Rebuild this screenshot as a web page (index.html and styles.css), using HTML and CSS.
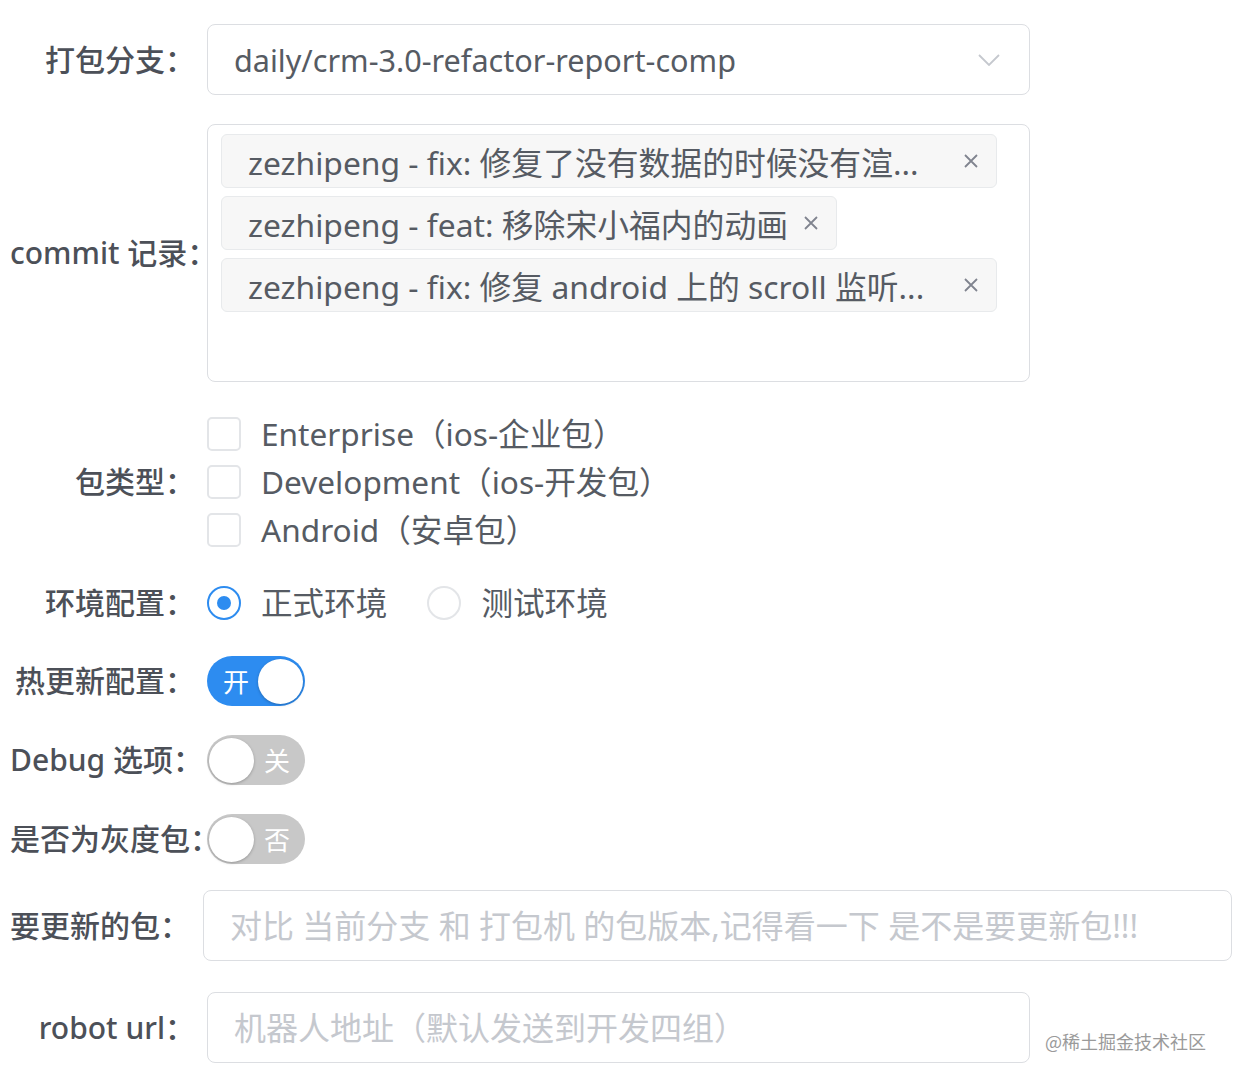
FILE: index.html
```html
<!DOCTYPE html>
<html lang="zh-CN">
<head>
<meta charset="utf-8">
<title>打包配置</title>
<link rel="stylesheet" href="styles.css">
</head>
<body>
<div class="form">
  <div class="row row-select">
    <label class="label">打包分支：</label>
    <div class="control select">
      <span class="select-text">daily/crm-3.0-refactor-report-comp</span>
      <svg class="arrow" width="22" height="12" viewBox="0 0 22 12"><path d="M1 1 L11 11 L21 1" fill="none" stroke="#c5c8ce" stroke-width="1.8"/></svg>
    </div>
  </div>

  <div class="row row-commit">
    <label class="label">commit 记录：</label>
    <div class="control tagbox">
      <div class="tag">
        <span class="tag-text tag-text-cap">zezhipeng - fix: 修复了没有数据的时候没有渲...</span>
        <svg class="close" width="16" height="16" viewBox="0 0 16 16"><path d="M2 2 L14 14 M14 2 L2 14" stroke="#80848f" stroke-width="1.8"/></svg>
      </div>
      <div class="tag">
        <span class="tag-text">zezhipeng - feat: 移除宋小福内的动画</span>
        <svg class="close" width="16" height="16" viewBox="0 0 16 16"><path d="M2 2 L14 14 M14 2 L2 14" stroke="#80848f" stroke-width="1.8"/></svg>
      </div>
      <div class="tag">
        <span class="tag-text tag-text-cap">zezhipeng - fix: 修复 android 上的 scroll 监听...</span>
        <svg class="close" width="16" height="16" viewBox="0 0 16 16"><path d="M2 2 L14 14 M14 2 L2 14" stroke="#80848f" stroke-width="1.8"/></svg>
      </div>
    </div>
  </div>

  <div class="row row-check">
    <label class="label">包类型：</label>
    <div class="control checks">
      <div class="check"><span class="check-box"></span><span class="opt-text">Enterprise（ios-企业包）</span></div>
      <div class="check"><span class="check-box"></span><span class="opt-text">Development（ios-开发包）</span></div>
      <div class="check"><span class="check-box"></span><span class="opt-text">Android（安卓包）</span></div>
    </div>
  </div>

  <div class="row row-radio">
    <label class="label">环境配置：</label>
    <div class="control radios">
      <div class="radio radio-on"><span class="radio-circle"><span class="radio-dot"></span></span><span class="opt-text">正式环境</span></div>
      <div class="radio"><span class="radio-circle"></span><span class="opt-text">测试环境</span></div>
    </div>
  </div>

  <div class="row row-switch">
    <label class="label">热更新配置：</label>
    <div class="switch switch-on"><span class="switch-text">开</span><span class="knob"></span></div>
  </div>

  <div class="row row-switch">
    <label class="label">Debug 选项：</label>
    <div class="switch switch-off"><span class="knob"></span><span class="switch-text">关</span></div>
  </div>

  <div class="row row-switch row-switch-last">
    <label class="label">是否为灰度包：</label>
    <div class="switch switch-off"><span class="knob"></span><span class="switch-text">否</span></div>
  </div>

  <div class="row row-input row-wide">
    <label class="label label-narrow">要更新的包：</label>
    <input class="control text-input input-wide" type="text" placeholder="对比 当前分支 和 打包机 的包版本,记得看一下 是不是要更新包!!!">
  </div>

  <div class="row row-input row-last">
    <label class="label">robot url：</label>
    <input class="control text-input" type="text" placeholder="机器人地址（默认发送到开发四组）">
  </div>
</div>
<div class="watermark">@稀土掘金技术社区</div>
</body>
</html>
```

FILE: styles.css
```css
html, body {
  margin: 0;
  padding: 0;
  background: #ffffff;
}

body {
  font-family: "Noto Sans", "Noto Sans CJK SC", sans-serif;
  color: #515a6e;
  width: 1234px;
  height: 1080px;
  overflow: hidden;
  position: relative;
}

.form {
  padding-top: 24px;
}

.row {
  display: flex;
  align-items: center;
}

.label {
  box-sizing: border-box;
  flex: 0 0 207px;
  width: 207px;
  padding: 0 12px 0 10px;
  text-align: right;
  white-space: nowrap;
  font-size: 30px;
  font-weight: 500;
  line-height: 40px;
  color: #4c5058;
}

.label-narrow {
  flex-basis: 203px;
  width: 203px;
  padding-right: 13px;
}

.control {
  box-sizing: border-box;
  width: 823px;
  border: 1px solid #dcdee2;
  border-radius: 8px;
  background: #fff;
}

/* select */
.row-select {
  margin-bottom: 29px;
}

.select {
  height: 71px;
  display: flex;
  align-items: center;
  justify-content: space-between;
  padding: 0 29px 0 26px;
  font-size: 30.6px;
  color: #565b63;
}

.arrow {
  display: block;
}

/* tags */
.row-commit {
  margin-bottom: 28px;
}

.tagbox {
  height: 258px;
  padding: 9px 13px;
  display: flex;
  flex-direction: column;
  align-items: flex-start;
  gap: 8px;
}

.tag {
  box-sizing: border-box;
  height: 54px;
  display: flex;
  align-items: center;
  padding: 0 17px 0 26px;
  background: #f7f7f7;
  border: 1px solid #e8eaec;
  border-radius: 6px;
  font-size: 31.8px;
  color: #565b63;
  white-space: nowrap;
}

.tag-text-cap {
  display: inline-block;
  width: 700px;
  overflow: hidden;
}

.close {
  display: block;
  margin-left: 15px;
  flex: 0 0 16px;
}

/* checkbox */
.row-check {
  margin-bottom: 25px;
}

.checks,
.radios {
  border: none;
  border-radius: 0;
  background: transparent;
}

.checks {
  display: flex;
  flex-direction: column;
}

.check {
  height: 48px;
  display: flex;
  align-items: center;
}

.check-box {
  box-sizing: border-box;
  width: 34px;
  height: 34px;
  border: 2px solid #e3e5e8;
  border-radius: 5px;
  margin-right: 20px;
  flex: 0 0 34px;
}

.opt-text {
  font-size: 31.6px;
  line-height: 44px;
  color: #565b63;
  white-space: nowrap;
}

/* radio */
.row-radio {
  margin-bottom: 29px;
}

.radios {
  height: 48px;
  display: flex;
  align-items: center;
}

.radio {
  display: flex;
  align-items: center;
  margin-right: 40px;
}

.radio-circle {
  box-sizing: border-box;
  width: 34px;
  height: 34px;
  border: 2px solid #e3e5e8;
  border-radius: 50%;
  margin-right: 20px;
  display: flex;
  align-items: center;
  justify-content: center;
  flex: 0 0 34px;
}

.radio-on .radio-circle {
  border-color: #2d8cf0;
}

.radio-dot {
  width: 14px;
  height: 14px;
  border-radius: 50%;
  background: #2d8cf0;
}

/* switch */
.row-switch {
  margin-bottom: 29px;
}

.row-switch-last {
  margin-bottom: 26px;
}

.switch {
  box-sizing: border-box;
  width: 98px;
  height: 50px;
  border-radius: 25px;
  display: flex;
  align-items: center;
}

.switch-on {
  background: #2d8cf0;
  padding: 0 2px 0 16px;
}

.switch-off {
  background: #c8c8c8;
  padding: 0 15px 0 2px;
}

.switch-text {
  font-family: "Noto Sans CJK SC", sans-serif;
  font-size: 26px;
  line-height: 1;
  color: #ffffff;
}

.knob {
  width: 45px;
  height: 45px;
  border-radius: 50%;
  background: #ffffff;
  box-shadow: 0 1px 3px rgba(0, 0, 0, 0.25);
  margin-left: auto;
}

.switch-off .knob {
  margin-left: 0;
  margin-right: auto;
}

/* inputs */
.row-input {
  margin-bottom: 31px;
}

.text-input {
  height: 71px;
  padding: 0 26px;
  font-family: "Noto Sans", "Noto Sans CJK SC", sans-serif;
  font-size: 32px;
  color: #565b63;
  outline: none;
}

.text-input::placeholder {
  color: #c5c8ce;
  opacity: 1;
}

.input-wide {
  width: 1029px;
}

.watermark {
  position: absolute;
  left: 1045px;
  top: 1028px;
  font-family: "Noto Sans CJK SC", sans-serif;
  font-size: 18px;
  line-height: 26px;
  color: #9a9a9a;
  white-space: nowrap;
}
```
